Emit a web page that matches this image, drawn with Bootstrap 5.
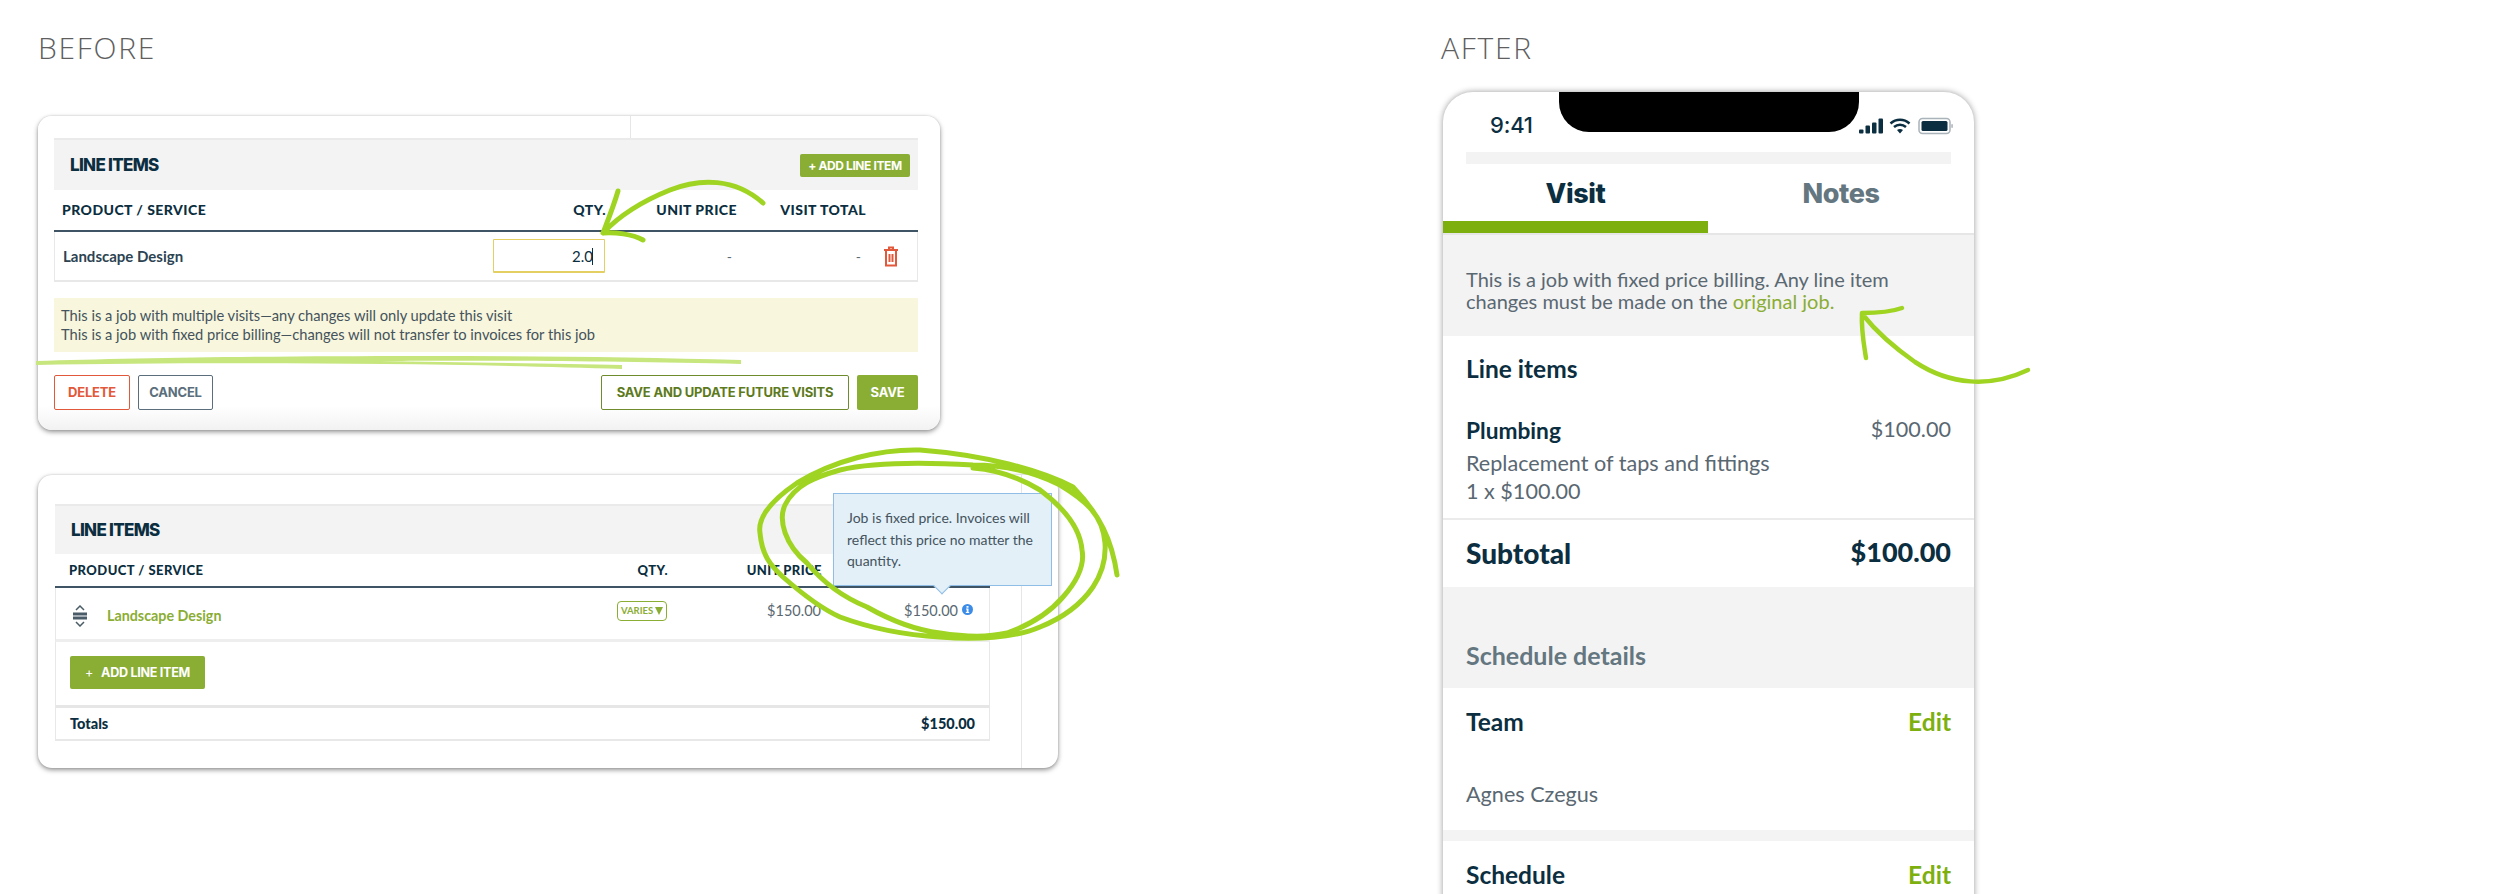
<!DOCTYPE html>
<html lang="en">
  <head>
    <meta charset="UTF-8" />
    <meta name="viewport" content="width=device-width, initial-scale=1.0" />
    <title>Line items before and after</title>
    <link href="https://cdn.jsdelivr.net/npm/bootstrap@5.3.2/dist/css/bootstrap.min.css" rel="stylesheet" />
    <style>
      :root { --navy: #0b2e40; --slate: #5a6872; --green: #8aad34; --bright: #7db00e; --pale: #f3f3f3; }
      html, body { height: 894px; overflow: hidden; background: #fff; }
      body { position: relative; font-family: "Lato", "Liberation Sans", sans-serif; color: var(--slate); }
      .side-title { height: 40px; font: 300 30px/40px "Open Sans", sans-serif; color: #5f5f5f; letter-spacing: 1.7px; margin-top: 28px; }
      .side-before { width: 1441px; padding-left: 38px; }
      .panel { border: 0; border-radius: 14px; box-shadow: 0 2px 5px rgba(0,0,0,.42), 0 0 2px rgba(0,0,0,.15); }
      .panel-one { width: 902px; margin-top: 48px; height: 314px; padding: 22px 22px 0 16px; background: linear-gradient(#fff 290px, #f2f2f2); }
      .panel-two { width: 1020px; margin-top: 45px; height: 293px; padding: 29px 68px 0 17px; }
      .rule-v { position: absolute; width: 1px; background: #e6e6e6; top: 0; }
      .rule-one { left: 592px; height: 22px; }
      .rule-two { left: 983px; bottom: 0; }
      .gray-head { background: var(--pale); border-top: 2px solid #eaeaea; height: 52px; }
      .head-two { height: 50px; }
      .head-label { font: 800 17px "Inter", sans-serif; color: var(--navy); letter-spacing: -.7px; }
      .btn-mini { background: var(--green); color: #fff; border: 0; border-radius: 2px; font: 700 12px/23px "Inter", sans-serif; height: 23px; width: 110px; padding: 0; letter-spacing: -.4px; }
      .grid-one, .grid-two { display: grid; border-left: 1px solid #e8e8e8; border-right: 1px solid #e8e8e8; }
      .grid-one { grid-template-columns: minmax(0, 1fr) 112px 131px 129px 52px; }
      .grid-two { grid-template-columns: minmax(0, 1fr) 73px 154px 168px; }
      .col-labels { font: 900 14px/20px "Lato", sans-serif; color: var(--navy); letter-spacing: .45px; border-bottom: 2px solid #3f5566; align-items: center; border-left: 0; border-right: 0; }
      .labels-one { height: 42px; }
      .labels-two { height: 34px; font-size: 13px; }
      .cell-first { padding-left: 8px; }
      .cell-second { padding-left: 14px; }
      .line-one { height: 50px; align-items: center; border-bottom: 2px solid #e8e8e8; font-size: 14px; }
      .item-name { font-weight: 700; color: #2c4352; font-size: 15px; }
      .caret-bar { display: inline-block; width: 1px; height: 17px; background: var(--navy); vertical-align: -3px; margin-left: -1px; }
      .qty-box { height: 34px; border: 1px solid #e3cf62; border-bottom-width: 2px; border-radius: 1px; text-align: right; padding-right: 11px; line-height: 33px; color: var(--navy); font-size: 15px; background: #fff; }
      .notice-yellow { background: #f8f6dc; margin-top: 16px; height: 54px; padding: 8px 7px; font-size: 14.7px; line-height: 19px; color: #44535d; }
      .action-row { margin-top: 23px; }
      .btn-act { height: 35px; border-radius: 2px; font: 700 13px/31px "Inter", sans-serif; padding: 0; letter-spacing: -.2px; }
      .btn-del { width: 76px; color: #e2583a; border: 1px solid #e2583a; background: #fff; }
      .btn-can { width: 75px; color: #5a6e7c; border: 1px solid #5a6e7c; background: #fff; }
      .btn-fut { width: 248px; color: #5d7a1d; border: 1px solid #6f8c2c; background: #fff; }
      .btn-sav { width: 61px; color: #fff; background: var(--green); border: 0; }
      .line-two { height: 54px; font-size: 14.5px; border-bottom: 3px solid #eee; }
      .item-link { color: var(--green); font-weight: 700; font-size: 14.3px; text-decoration: none; margin-left: 3px; }
      .varies-tag { display: inline-flex; align-items: center; gap: 2px; height: 20px; width: 50px; justify-content: center; border: 1px solid var(--green); border-radius: 4px; color: var(--green); font-size: 9.5px; font-weight: 700; margin-top: 5px; }
      .adder { height: 63px; padding: 14px 0 0 14px; border-left: 1px solid #e8e8e8; border-right: 1px solid #e8e8e8; }
      .btn-add { width: 135px; height: 33px; background: var(--green); color: #fff; border: 0; border-radius: 2px; font: 700 12.6px/33px "Inter", sans-serif; padding: 0; letter-spacing: -.3px; }
      .totals-row { height: 36px; border: 1px solid #e8e8e8; border-top: 3px solid #e6e6e6; border-bottom-width: 2px; padding: 0 14px 0 14px; font-weight: 900; font-size: 14.5px; color: var(--navy); }
      .tip-box { position: absolute; left: 795px; top: 18px; width: 219px; height: 93px; background: #e3f0f8; border: 1px solid #8fbde6; padding: 13px 13px; font-size: 14px; line-height: 21.5px; color: #44535d; }
      .tip-box::after { content: ""; position: absolute; left: 102px; bottom: -7px; width: 12px; height: 12px; background: #e3f0f8; border-right: 1px solid #8fbde6; border-bottom: 1px solid #8fbde6; transform: rotate(45deg); }
      .side-after { width: 1059px; }
      .phone { width: 531px; margin: 24px 0 0 2px; border-radius: 30px 30px 0 0; box-shadow: 0 0 6px rgba(0,0,0,.4); position: relative; height: 830px; background: #fff; }
      .status-line { height: 60px; padding: 0 21px 0 47px; }
      .clock { font: 500 22px/1 "Inter", sans-serif; color: var(--navy); margin-top: 22px; letter-spacing: -.2px; }
      .stat-icons { margin-top: 22px; }
      .notch-cut { position: absolute; left: 116px; top: 0; width: 300px; height: 40px; background: #000; border-radius: 0 0 30px 30px; }
      .strip-top { height: 12px; margin: 0 23px; background: var(--pale); }
      .tab-wrap { height: 71px; border-bottom: 2px solid #e6e6e6; }
      .tab-one, .tab-two { width: 265px; height: 69px; font: 800 27px/60px "Inter", sans-serif; text-align: center; letter-spacing: -.4px; }
      .tab-one { color: var(--navy); border-bottom: 12px solid var(--bright); }
      .tab-two { color: #64767f; width: 266px; }
      .notice-gray { background: var(--pale); height: 101px; padding: 33px 23px 0; font-size: 20px; line-height: 22px; color: var(--slate); }
      .notice-gray a { color: var(--green); text-decoration: none; }
      .block-pad { padding-left: 23px; padding-right: 23px; }
      .title-big { font-weight: 700; font-size: 24.5px; line-height: 26px; color: var(--navy); }
      .item-bold { font-weight: 700; font-size: 22.7px; line-height: 26px; color: var(--navy); }
      .body-txt { font-weight: 400; font-size: 21.6px; line-height: 28px; color: var(--slate); }
      .row-plumb { margin-top: 36px; }
      .row-plumb .body-txt { line-height: 22px; }
      .row-desc { margin-top: 5px; padding-bottom: 13px; }
      .sub-row { height: 69px; padding-bottom: 2px; border-top: 2px solid #ebebeb; font-weight: 900; font-size: 28px; color: var(--navy); }
      .sub-price { font-size: 27px; }
      .gray-gap { background: var(--pale); height: 101px; padding: 56px 23px 0; font-weight: 700; font-size: 25px; line-height: 24px; color: #64767f; }
      .edit-lnk { color: var(--bright); font-weight: 700; font-size: 24.5px; line-height: 26px; text-decoration: none; }
      .team-row { padding-top: 21px; }
      .agnes-row { margin-top: 45px; padding-bottom: 22px; }
      .gap-strip { height: 11px; background: var(--pale); }
      .scrawl { position: absolute; left: 0; top: 0; pointer-events: none; }
    </style>
  </head>
  <body>
    <div class="d-flex">
      <div class="side-before">
        <div class="side-title">BEFORE</div>

        <div class="card panel panel-one">
          <div class="rule-v rule-one"></div>
          <div class="gray-head d-flex align-items-center justify-content-between ps-3 pe-2">
            <span class="head-label">LINE ITEMS</span>
            <button type="button" class="btn btn-mini">+ ADD LINE ITEM</button>
          </div>
          <div class="grid-one col-labels labels-one">
            <div class="cell-first">PRODUCT / SERVICE</div>
            <div class="text-end">QTY.</div>
            <div class="text-end">UNIT PRICE</div>
            <div class="text-end">VISIT TOTAL</div>
            <div></div>
          </div>
          <div class="grid-one line-one">
            <div class="cell-first item-name">Landscape Design</div>
            <div class="qty-box">2.0<span class="caret-bar"></span></div>
            <div class="text-end pe-1">-</div>
            <div class="text-end pe-1">-</div>
            <div class="d-flex justify-content-center">
              <svg width="14" height="21" viewBox="0 0 14 21" fill="none" stroke="#e2583a" stroke-width="2"><path d="M0 4h14M5 4V1.500h4V4M2 4.500V19.500h10V4.500M5.500 8v8M8.500 8v8"/></svg>
            </div>
          </div>
          <div class="notice-yellow">
            This is a job with multiple visits—any changes will only update this visit<br />
            This is a job with fixed price billing—changes will not transfer to invoices for this job
          </div>
          <div class="action-row d-flex">
            <button type="button" class="btn btn-act btn-del me-2">DELETE</button>
            <button type="button" class="btn btn-act btn-can">CANCEL</button>
            <button type="button" class="btn btn-act btn-fut ms-auto me-2">SAVE AND UPDATE FUTURE VISITS</button>
            <button type="button" class="btn btn-act btn-sav">SAVE</button>
          </div>
        </div>

        <div class="card panel panel-two">
          <div class="rule-v rule-two"></div>
          <div class="gray-head head-two d-flex align-items-center ps-3">
            <span class="head-label">LINE ITEMS</span>
          </div>
          <div class="grid-two col-labels labels-two">
            <div class="cell-second">PRODUCT / SERVICE</div>
            <div class="text-end">QTY.</div>
            <div class="text-end">UNIT PRICE</div>
            <div></div>
          </div>
          <div class="grid-two line-two">
            <div class="d-flex align-items-center pt-1">
              <svg class="ms-3 me-3" width="16" height="22" viewBox="0 0 16 22" fill="none"><path d="M4 5l4-4 4 4M4 17l4 4 4-4" stroke="#4a5c68" stroke-width="1.500"/><path d="M1 7.500h14v3H1zM1 11.500h14v3H1z" fill="#4a5c68"/></svg>
              <a href="#" class="item-link">Landscape Design</a>
            </div>
            <div class="d-flex justify-content-end align-items-start pt-2">
              <span class="varies-tag">VARIES<svg width="8" height="8" viewBox="0 0 8 8"><path d="M0 0h8L4 8z" fill="#8aad34"/></svg></span>
            </div>
            <div class="text-end pt-2 mt-1">$150.00</div>
            <div class="d-flex justify-content-end align-items-start pt-2 mt-1 pe-3 gap-1">
              <span>$150.00</span>
              <svg class="mt-1" width="11" height="11" viewBox="0 0 11 11"><circle cx="5.500" cy="5.500" r="5.500" fill="#3b8be8"/><path d="M4.500 2h2v1.700h-2zM4 4.500h2.500V8H7.200v1H3.800V8h.9V5.500H4z" fill="#fff"/></svg>
            </div>
          </div>
          <div class="adder">
            <button type="button" class="btn btn-add"><span class="fw-normal me-2">+</span>ADD LINE ITEM</button>
          </div>
          <div class="totals-row d-flex align-items-center justify-content-between">
            <span>Totals</span>
            <span>$150.00</span>
          </div>
          <div class="tip-box">Job is fixed price. Invoices will reflect this price no matter the quantity.</div>
        </div>
      </div>

      <div class="side-after">
        <div class="side-title">AFTER</div>
        <div class="phone">
          <div class="notch-cut"></div>
          <div class="status-line d-flex justify-content-between align-items-start">
            <span class="clock">9:41</span>
            <svg class="stat-icons" width="94" height="22" viewBox="0 0 94 22">
              <rect x="0" y="15.500" width="4.500" height="4" rx="1" fill="#0b2e40"/><rect x="6.500" y="11.500" width="4.500" height="8" rx="1" fill="#0b2e40"/><rect x="13" y="8.500" width="4.500" height="11" rx="1" fill="#0b2e40"/><rect x="19.500" y="4.500" width="4.500" height="15" rx="1" fill="#0b2e40"/>
              <path d="M31.500 9.500C37 4.500 45 4.500 50.500 9.500M35 13C38.500 10 43.500 10 47 13" stroke="#0b2e40" stroke-width="2.500" fill="none"/><path d="M38 16C40 14.500 42 14.500 44 16L41 19.500z" fill="#0b2e40"/>
              <rect x="60" y="4.500" width="31" height="15" rx="3.500" fill="none" stroke="#a9b3b9" stroke-width="1.500"/><rect x="62.500" y="7" width="26" height="10" rx="1.500" fill="#0b2e40"/><rect x="92.300" y="10" width="1.500" height="4" rx=".7" fill="#a9b3b9"/>
            </svg>
          </div>
          <div class="strip-top"></div>
          <div class="tab-wrap d-flex">
            <div class="tab-one">Visit</div>
            <div class="tab-two">Notes</div>
          </div>
          <div class="notice-gray">
            This is a job with fixed price billing. Any line item<br />
            changes must be made on the <a href="#">original job.</a>
          </div>
          <div class="block-pad title-big pt-3 mt-1">Line items</div>
          <div class="block-pad d-flex justify-content-between item-bold row-plumb">
            <span>Plumbing</span>
            <span class="body-txt">$100.00</span>
          </div>
          <div class="block-pad body-txt row-desc">Replacement of taps and fittings<br />1 x $100.00</div>
          <div class="block-pad sub-row d-flex align-items-center justify-content-between">
            <span>Subtotal</span>
            <span class="sub-price">$100.00</span>
          </div>
          <div class="gray-gap">Schedule details</div>
          <div class="block-pad d-flex justify-content-between title-big team-row">
            <span>Team</span>
            <a href="#" class="edit-lnk">Edit</a>
          </div>
          <div class="block-pad body-txt agnes-row">Agnes Czegus</div>
          <div class="gap-strip"></div>
          <div class="block-pad d-flex justify-content-between title-big team-row">
            <span>Schedule</span>
            <a href="#" class="edit-lnk">Edit</a>
          </div>
        </div>
      </div>
    </div>

    <!-- hand drawn notes over both mockups -->
    <svg class="scrawl" width="2500" height="894" viewBox="0 0 2500 894" fill="none" stroke="#9fd422" stroke-linecap="round" stroke-linejoin="round">
      <path d="M36 361C200 356 500 353 741 360V364C600 361 450 360 380 361C450 362 560 364 622 365V369C450 363 200 362 36 365Z" fill="#c8e67e" stroke="none"/>
      <path stroke-width="5" d="M763 203C735 178 700 178 670 190C640 202 620 215 603 233M618 191C614 205 608 220 603 233C615 232 632 234 643 240"/>
      <path stroke-width="5" d="M1117 575C1112 540 1100 515 1073 487C1040 470 985 455 920 450C880 449 835 460 797 483C775 498 757 515 760 533C762 555 770 565 783 577C800 592 820 608 840 617C870 628 905 635 940 637C975 640 1015 638 1040 627C1065 617 1082 603 1093 587C1103 572 1106 557 1105 543C1103 515 1085 500 1060 485C1030 470 1000 465 973 465C920 462 870 463 840 470C815 477 795 485 785 505C778 520 785 545 807 563C825 585 845 598 867 607C890 620 915 630 940 633C965 637 990 637 1007 633C1030 625 1050 612 1063 597C1078 580 1085 565 1082 550C1080 525 1060 505 1040 490C1020 478 1000 470 973 468"/>
      <path stroke-width="4.500" d="M2028 370C1990 388 1950 385 1915 362C1895 348 1875 330 1863 315M1902 308C1888 313 1872 313 1862 313C1861 330 1864 345 1866 358"/>
    </svg>

    <script src="https://cdn.jsdelivr.net/npm/bootstrap@5.3.2/dist/js/bootstrap.bundle.min.js"></script>
  </body>
</html>
